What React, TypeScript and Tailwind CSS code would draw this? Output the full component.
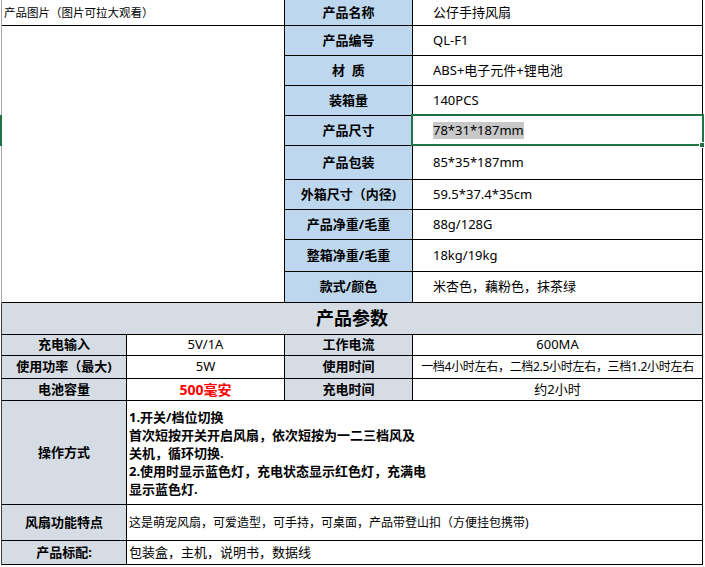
import React from "react";

const topRows: { label: string; value: string; h: string; sel?: boolean }[] = [
  { label: "产品名称", value: "公仔手持风扇", h: "h-[26px]" },
  { label: "产品编号", value: "QL-F1", h: "h-[30px]" },
  { label: "材  质", value: "ABS+电子元件+锂电池", h: "h-[30px]" },
  { label: "装箱量", value: "140PCS", h: "h-[30px]" },
  { label: "产品尺寸", value: "78*31*187mm", h: "h-[30px]", sel: true },
  { label: "产品包装", value: "85*35*187mm", h: "h-[34px]" },
  { label: "外箱尺寸（内径)", value: "59.5*37.4*35cm", h: "h-[30px]" },
  { label: "产品净重/毛重", value: "88g/128G", h: "h-[30px]" },
  { label: "整箱净重/毛重", value: "18kg/19kg", h: "h-[32px]" },
  { label: "款式/颜色", value: "米杏色，藕粉色，抹茶绿", h: "h-[31px]" },
];

export default function App() {
  return (
    <div className="relative w-[705px] h-[567px] bg-white overflow-hidden text-black font-['Noto_Sans','Noto_Sans_CJK_SC',sans-serif]">
      <div className="flex flex-col w-[703px] ml-px">
        {/* top section */}
        <div className="flex border-l border-[#a8a8a8]">
          <div className="flex flex-col w-[283px]">
            <div className="h-[26px] border-b border-r border-black flex items-center pl-[2px] text-[11.5px] leading-none">
              产品图片（图片可拉大观看）
            </div>
            <div className="flex-1 border-b border-r border-black" />
          </div>
          <div className="flex flex-col w-[418px]">
            {topRows.map((r) => (
              <div key={r.label} className={`flex ${r.h}`}>
                <div className="w-[128px] bg-[#bdd7ee] border-r border-b border-black flex items-center justify-center text-[13px] font-bold whitespace-pre">
                  {r.label}
                </div>
                <div className="w-[290px] border-r border-b border-black flex items-center pl-[20px] text-[13px]">
                  {r.sel ? (
                    <span className="bg-[#c8c8c8] leading-[17px] inline-block">{r.value}</span>
                  ) : (
                    r.value
                  )}
                </div>
              </div>
            ))}
          </div>
        </div>

        {/* params */}
        <div className="flex flex-col border-l border-[#404040] w-[702px]">
          <div className="h-[32px] bg-[#d6dce4] border-b border-r border-black flex items-center justify-center text-[18px] font-bold">
            产品参数
          </div>
          <div className="grid grid-cols-[125px_158px_128px_290px]">
            <Label h="h-[21px]">充电输入</Label>
            <Val>5V/1A</Val>
            <Label>工作电流</Label>
            <Val>600MA</Val>

            <Label h="h-[23px]">使用功率（最大)</Label>
            <Val>5W</Val>
            <Label>使用时间</Label>
            <Val small>一档4小时左右，二档2.5小时左右，三档1.2小时左右</Val>

            <Label h="h-[22px]">电池容量</Label>
            <div className="border-r border-b border-black flex items-center justify-center text-[14px] font-bold text-[#ff0000]">
              500毫安
            </div>
            <Label>充电时间</Label>
            <Val>约2小时</Val>
          </div>
          <div className="flex h-[104px]">
            <Label w="w-[125px]">操作方式</Label>
            <div className="flex-1 border-r border-b border-black flex flex-col justify-center pl-[2px] text-[13px] font-bold leading-[18px]">
              <div>1.开关/档位切换</div>
              <div>首次短按开关开启风扇，依次短按为一二三档风及</div>
              <div>关机，循环切换.</div>
              <div>2.使用时显示蓝色灯，充电状态显示红色灯，充满电</div>
              <div>显示蓝色灯.</div>
            </div>
          </div>
          <div className="flex h-[36px]">
            <Label w="w-[125px]">风扇功能特点</Label>
            <div className="flex-1 border-r border-b border-black flex items-center pl-[2px] text-[12px]">
              这是萌宠风扇，可爱造型，可手持，可桌面，产品带登山扣（方便挂包携带)
            </div>
          </div>
          <div className="flex h-[24px]">
            <Label w="w-[125px]">产品标配:</Label>
            <div className="flex-1 border-r border-b border-black flex items-center pl-[2px] text-[13px]">
              包装盒，主机，说明书，数据线
            </div>
          </div>
        </div>
      </div>

      {/* row header selection indicator */}
      <div className="absolute left-0 top-[115px] w-[2px] h-[31px] bg-[#217346]" />
      {/* selected cell */}
      <div className="absolute left-[411px] top-[114px] w-[293px] h-[32px] border-2 border-[#217346] pointer-events-none" />
      <div className="absolute left-[699px] top-[142px] w-[6px] h-[6px] bg-[#217346] border border-white" />
    </div>
  );
}

function Label({ children, h = "", w = "" }: { children: React.ReactNode; h?: string; w?: string }) {
  return (
    <div className={`${h} ${w} bg-[#d6dce4] border-r border-b border-black flex items-center justify-center text-[13px] font-bold whitespace-nowrap`}>
      {children}
    </div>
  );
}

function Val({ children, small }: { children: React.ReactNode; small?: boolean }) {
  return (
    <div className={`border-r border-b border-black flex items-center justify-center whitespace-nowrap ${small ? "text-[12px] tracking-[-0.3px]" : "text-[13px]"}`}>
      {children}
    </div>
  );
}
